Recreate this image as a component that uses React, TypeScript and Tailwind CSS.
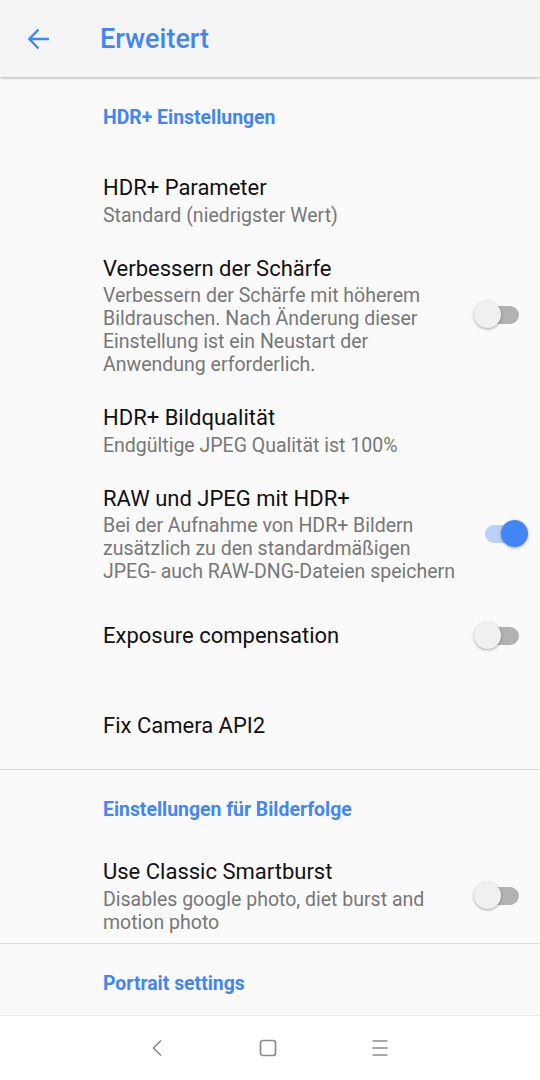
import React from "react";

const font = { fontFamily: "Roboto, 'Noto Sans', sans-serif" };

function Toggle({ on }: { on?: boolean }) {
  return (
    <div className="relative w-[56px] h-[28px] shrink-0">
      <div
        className={`absolute left-[11px] top-[5px] w-[34px] h-[18px] rounded-full ${
          on ? "bg-[#b9d0f8]" : "bg-[#b2b2b2]"
        }`}
      />
      <div
        className={`absolute top-0 w-[27px] h-[27px] rounded-full shadow-[0_1px_3px_rgba(0,0,0,0.35)] ${
          on ? "left-[27px] bg-[#4285f4]" : "left-0 bg-[#f0f0f0]"
        }`}
      />
    </div>
  );
}

function Category({ label, className }: { label: string; className: string }) {
  return (
    <div className={`pl-[103px] ${className}`}>
      <p className="text-[19.4px] leading-[22px] font-bold text-[#4285f4]">{label}</p>
    </div>
  );
}

function Pref({
  title,
  lines,
  toggle,
  className = "pt-[15px] pb-[13px]",
}: {
  title: string;
  lines?: string[];
  toggle?: "on" | "off";
  className?: string;
}) {
  return (
    <div className={`flex items-center pl-[103px] pr-[20px] ${className}`}>
      <div className="flex-1">
        <p className="text-[22px] leading-[28px] text-[#111]">{title}</p>
        {lines && (
          <div className="mt-[1.5px] text-[19.5px] leading-[23px] text-[#777]">
            {lines.map((l) => (
              <p key={l} className="whitespace-nowrap">{l}</p>
            ))}
          </div>
        )}
      </div>
      {toggle && (
        <div className="-mr-[10px]">
          <Toggle on={toggle === "on"} />
        </div>
      )}
    </div>
  );
}

export default function App() {
  return (
    <div className="w-[540px] h-[1080px] flex flex-col bg-[#fafafa] overflow-hidden" style={font}>
      {/* Toolbar */}
      <div className="h-[77px] shrink-0 flex items-center bg-[#f5f5f5] shadow-[0_1px_3px_rgba(0,0,0,0.3)] relative z-10">
        <div className="w-[100px] flex justify-center pr-[23px] pt-[1px]">
          <svg width="24" height="24" viewBox="0 0 24 24" fill="none" stroke="#4285f4" strokeWidth="2.4">
            <path d="M22 12H2.5M11.5 2.5L2.3 12l9.2 9.5" />
          </svg>
        </div>
        <h1 className="text-[27px] font-medium text-[#4285f4] pt-[2px]">Erweitert</h1>
      </div>

      {/* List */}
      <div className="flex-1 overflow-hidden">
        <Category label="HDR+ Einstellungen" className="pt-[30px] pb-[30px]" />
        <Pref title="HDR+ Parameter" lines={["Standard (niedrigster Wert)"]} />
        <Pref
          title="Verbessern der Schärfe"
          lines={[
            "Verbessern der Schärfe mit höherem",
            "Bildrauschen. Nach Änderung dieser",
            "Einstellung ist ein Neustart der",
            "Anwendung erforderlich.",
          ]}
          toggle="off"
        />
        <Pref title="HDR+ Bildqualität" lines={["Endgültige JPEG Qualität ist 100%"]} />
        <Pref
          title="RAW und JPEG mit HDR+"
          lines={[
            "Bei der Aufnahme von HDR+ Bildern",
            "zusätzlich zu den standardmäßigen",
            "JPEG- auch RAW-DNG-Dateien speichern",
          ]}
          toggle="on"
        />
        <Pref title="Exposure compensation" toggle="off" className="h-[80px]" />
        <Pref title="Fix Camera API2" className="pt-[36px] pb-[29px]" />
        <div className="h-px bg-[#dcdcdc]" />
        <Category label="Einstellungen für Bilderfolge" className="pt-[29px] pb-[23px]" />
        <Pref
          title="Use Classic Smartburst"
          lines={["Disables google photo, diet burst and", "motion photo"]}
          toggle="off"
          className="pt-[14px] pb-[9px]"
        />
        <div className="h-px bg-[#dcdcdc]" />
        <Category label="Portrait settings" className="pt-[29px] pb-[30px]" />
      </div>

      {/* Navigation bar */}
      <div className="h-[65px] shrink-0 bg-white border-t border-[#ececec] flex items-center justify-center gap-[94px] pr-[2px]">
        <svg width="16" height="18" viewBox="0 0 16 18" fill="none" stroke="#8a8a8a" strokeWidth="1.6">
          <path d="M12 1.5L4.5 9l7.5 7.5" />
        </svg>
        <svg width="18" height="18" viewBox="0 0 18 18" fill="none" stroke="#8a8a8a" strokeWidth="1.7">
          <rect x="1.5" y="1.5" width="15" height="15" rx="2.5" />
        </svg>
        <svg width="18" height="18" viewBox="0 0 18 18" fill="none" stroke="#8a8a8a" strokeWidth="1.5">
          <path d="M1.5 2h15M1.5 9h15M1.5 16h15" />
        </svg>
      </div>
    </div>
  );
}
